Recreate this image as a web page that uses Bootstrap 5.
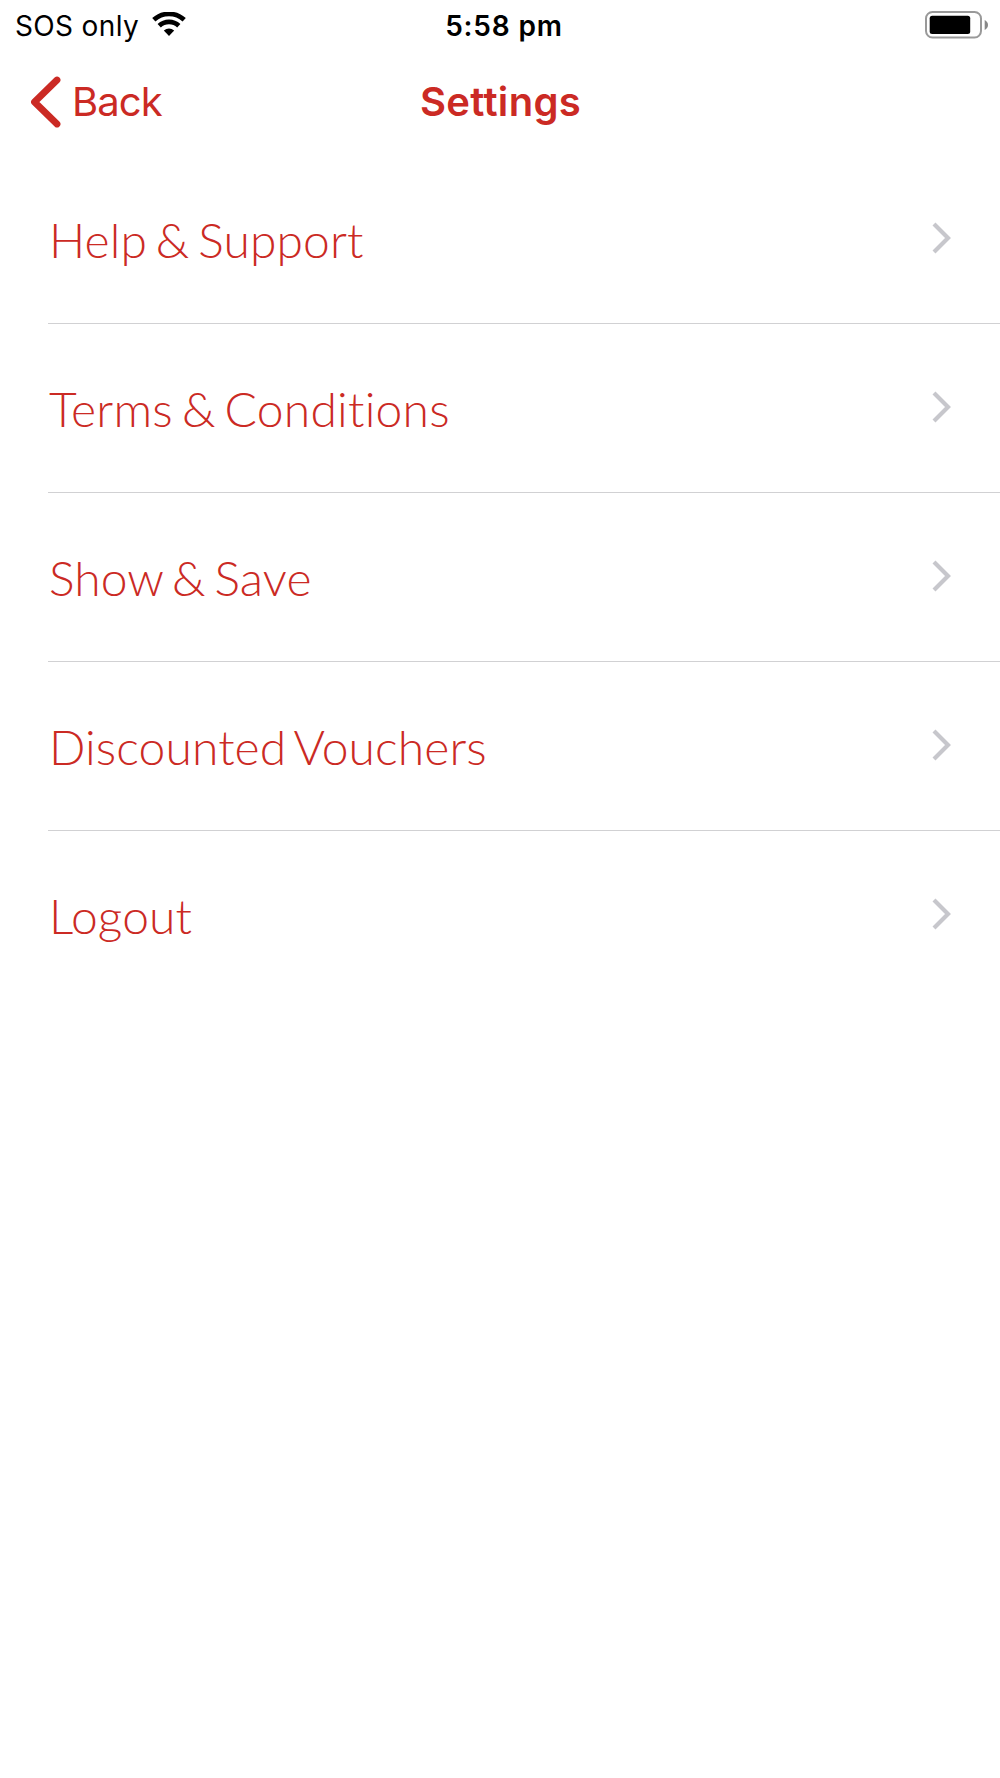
<!DOCTYPE html>
<html lang="en">
<head>
<meta charset="utf-8">
<meta name="viewport" content="width=device-width, initial-scale=1">
<title>Settings</title>
<link href="https://cdn.jsdelivr.net/npm/bootstrap@5.3.0/dist/css/bootstrap.min.css" rel="stylesheet">
<style>
:root { --brand: #cb2a24; }
body { font-family: Inter, "Liberation Sans", sans-serif; min-height: 1778px; overflow: hidden; }
.statusbar { height: 50px; padding: 0 12px 0 15px; font-size: 28px; line-height: 50px; color: #000; }
.side { flex: 1 1 0; }
.carrier { letter-spacing: .35px; padding-top: 2px; line-height: 49px; }
.clock { font-weight: 600; letter-spacing: .85px; padding: 2px 0 0 5px; line-height: 49px; }
.wifi { margin-left: 13px; margin-bottom: 1px; }
.battery { margin-bottom: 1px; }
.topbar { height: 105px; padding: 0 30px 1px; color: var(--brand); font-size: 40px; line-height: 60px; }
.topbar a, .topbar h1 { color: inherit; font-size: inherit; line-height: inherit; }
.backlabel { letter-spacing: -.9px; margin-left: 11px; }
.heading { font-weight: 600; letter-spacing: .3px; padding-left: 1px; }
.menu { padding-left: 48px; }
.menu .list-group-item { height: 169px; border-color: #d1d1d3; padding: 0 47px 0 1px; color: var(--brand); font: 300 48px/58px Lato, sans-serif; letter-spacing: .1px; word-spacing: -4.3px; font-variant-ligatures: none; }
.menu .list-group-item span { padding-top: 2px; }
.menu .list-group-item .wide { letter-spacing: .22px; }
.menu .list-group-item svg { margin-bottom: 2px; }
.menu .list-group-item:last-child { border-bottom: 1px solid transparent; }
</style>
</head>
<body class="bg-white">
<header>
  <div class="statusbar d-flex align-items-center">
    <div class="side d-flex align-items-center">
      <span class="carrier">SOS only</span>
      <svg class="wifi" width="34" height="25" viewBox="0 0 34 25" aria-hidden="true">
        <g fill="none" stroke="#000" stroke-width="4.7"><path d="M1.8 7.8A22.5 22.5 0 0 1 32.2 7.8"/><path d="M7.2 13.8A14.2 14.2 0 0 1 26.8 13.8"/></g>
        <path d="M11.8 18.6Q17 14.2 22.2 18.6L17 24Z"/>
      </svg>
    </div>
    <time class="clock">5:58 pm</time>
    <div class="side d-flex justify-content-end">
      <svg class="battery" width="63" height="28" viewBox="0 0 63 28" aria-hidden="true">
        <rect x="1" y="1" width="55" height="25.5" rx="6.5" fill="#fff" stroke="#999" stroke-width="2"/>
        <rect x="4.7" y="4.7" width="40.5" height="18.3" rx="2.5"/>
        <path d="M59.7 9Q63 11 63 14T59.7 19Z" fill="#888"/>
      </svg>
    </div>
  </div>
  <nav class="topbar d-flex align-items-center">
    <div class="side d-flex"><a href="#" class="d-flex align-items-center text-decoration-none">
      <svg width="31" height="52" viewBox="0 0 31 52" aria-hidden="true"><path d="M27 4L4.5 26L27 48" fill="none" stroke="currentColor" stroke-width="6.8" stroke-linecap="round" stroke-linejoin="round"/></svg>
      <span class="backlabel">Back</span></a></div>
    <h1 class="heading m-0">Settings</h1>
    <div class="side"></div>
  </nav>
</header>
<main class="menu">
  <div class="list-group list-group-flush">
    <a href="#" class="list-group-item d-flex align-items-center justify-content-between"><span>Help &amp; Support</span><svg width="22" height="34" viewBox="0 0 22 34" aria-hidden="true"><path d="M3 3L17 17L3 31" fill="none" stroke="#c7c7cc" stroke-width="4.2"/></svg></a>
    <a href="#" class="list-group-item d-flex align-items-center justify-content-between"><span class="wide">Terms &amp; Conditions</span><svg width="22" height="34" viewBox="0 0 22 34" aria-hidden="true"><path d="M3 3L17 17L3 31" fill="none" stroke="#c7c7cc" stroke-width="4.2"/></svg></a>
    <a href="#" class="list-group-item d-flex align-items-center justify-content-between"><span>Show &amp; Save</span><svg width="22" height="34" viewBox="0 0 22 34" aria-hidden="true"><path d="M3 3L17 17L3 31" fill="none" stroke="#c7c7cc" stroke-width="4.2"/></svg></a>
    <a href="#" class="list-group-item d-flex align-items-center justify-content-between"><span>Discounted Vouchers</span><svg width="22" height="34" viewBox="0 0 22 34" aria-hidden="true"><path d="M3 3L17 17L3 31" fill="none" stroke="#c7c7cc" stroke-width="4.2"/></svg></a>
    <a href="#" class="list-group-item d-flex align-items-center justify-content-between"><span>Logout</span><svg width="22" height="34" viewBox="0 0 22 34" aria-hidden="true"><path d="M3 3L17 17L3 31" fill="none" stroke="#c7c7cc" stroke-width="4.2"/></svg></a>
  </div>
</main>
<script src="https://cdn.jsdelivr.net/npm/bootstrap@5.3.0/dist/js/bootstrap.bundle.min.js"></script>
</body>
</html>
